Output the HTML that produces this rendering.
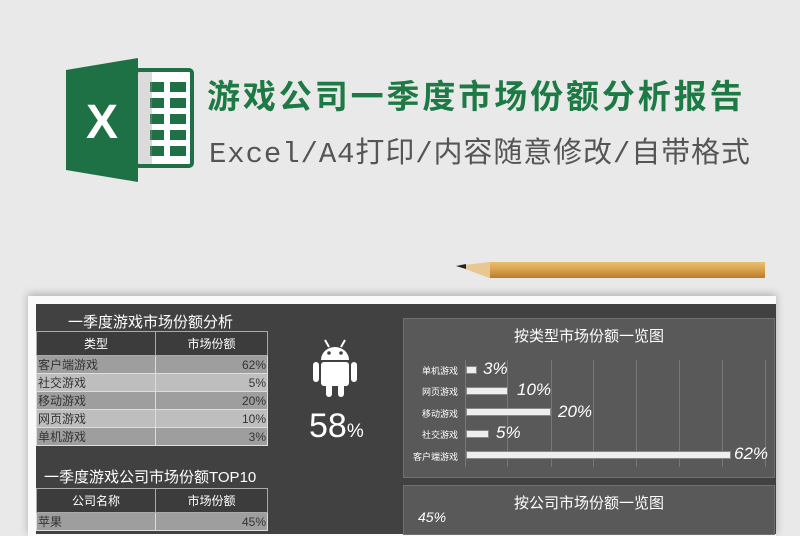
<!DOCTYPE html>
<html><head><meta charset="utf-8"><style>
*{margin:0;padding:0;box-sizing:border-box}
body{width:800px;height:526px;overflow:hidden;background:#e9e9e9;font-family:"Liberation Sans","Noto Sans CJK SC",sans-serif;position:relative}
.abs{position:absolute}
.t1{left:207px;top:70px;font-size:33px;font-weight:bold;color:#1e7a45;letter-spacing:2.9px;white-space:nowrap;font-family:"Noto Sans CJK SC",sans-serif}
.t2{left:209px;top:129px;font-size:29px;color:#555;white-space:nowrap;font-family:"Liberation Mono","Noto Sans CJK SC",monospace;letter-spacing:0.9px}
.paper{left:28px;top:296px;width:748px;height:240px;background:#fafafa;box-shadow:0 -2px 8px rgba(0,0,0,.25)}
.sheet{left:36px;top:304px;width:740px;height:230px;background:#414141}
table{border-collapse:collapse;position:absolute;left:36px;width:232px;font-size:12px;table-layout:fixed}
td{height:18px;border:1px solid #ddd;padding:0 1px;color:#333;line-height:16px}
td:first-child{width:119px}
td.r{text-align:right}
tr.h td{background:#3c3c3c;color:#fff;text-align:center;height:24px;border-color:#aaa}
tr.a td{background:#9e9e9e}
tr.b td{background:#bebebe}
.ttl{color:#fff;font-size:15px;white-space:nowrap}
.panel{left:403px;width:372px;background:#595959;border:1px solid #707070}
.lbl{color:#fff;font-size:9px;width:60px;text-align:right;left:398px}
.bar{left:466px;height:8px;background:#eee;border:1px solid #888}
.pct{color:#fff;font-style:italic;font-size:17px}
.g{top:360px;height:107px;width:1px;background:#777}
</style></head><body>
<svg class="abs" style="left:66px;top:58px" width="128" height="124" viewBox="0 0 128 124">
<rect x="70" y="12" width="56" height="96" rx="3" fill="#fff" stroke="#1f7044" stroke-width="4"/>
<g fill="#1f7044">
<rect x="84" y="24" width="14" height="10"/><rect x="104" y="24" width="16" height="10"/>
<rect x="84" y="40" width="14" height="10"/><rect x="104" y="40" width="16" height="10"/>
<rect x="84" y="56" width="14" height="10"/><rect x="104" y="56" width="16" height="10"/>
<rect x="84" y="72" width="14" height="10"/><rect x="104" y="72" width="16" height="10"/>
<rect x="84" y="88" width="14" height="10"/><rect x="104" y="88" width="16" height="10"/>
</g>
<rect x="70" y="14" width="16" height="92" fill="#999" opacity=".35"/>
<path d="M0 12 L72 0 L72 124 L0 112 Z" fill="#1e7145"/>
<text x="36" y="80" fill="#fff" font-size="48" font-weight="bold" text-anchor="middle" font-family="Liberation Sans">X</text>
</svg>
<div class="abs t1">游戏公司一季度市场份额分析报告</div>
<div class="abs t2">Excel/A4打印/内容随意修改/自带格式</div>
<svg class="abs" style="left:450px;top:258px" width="320" height="30">
<defs><linearGradient id="p" x1="0" y1="0" x2="0" y2="1"><stop offset="0" stop-color="#e8c070"/><stop offset=".5" stop-color="#d9a14a"/><stop offset="1" stop-color="#b77c2e"/></linearGradient></defs>
<path d="M8 8 L40 4 L315 4 L315 20 L40 20 Z" fill="url(#p)"/>
<path d="M8 8 L40 4 L40 20 Z" fill="#e8c890"/>
<path d="M6 8 L16 6 L16 11 Z" fill="#222"/>
</svg>
<div class="abs paper"></div>
<div class="abs sheet"></div>
<div class="abs ttl" style="left:68px;top:311px">一季度游戏市场份额分析</div>
<table style="top:331px">
<tr class="h"><td>类型</td><td>市场份额</td></tr>
<tr class="a"><td>客户端游戏</td><td class="r">62%</td></tr>
<tr class="b"><td>社交游戏</td><td class="r">5%</td></tr>
<tr class="a"><td>移动游戏</td><td class="r">20%</td></tr>
<tr class="b"><td>网页游戏</td><td class="r">10%</td></tr>
<tr class="a"><td>单机游戏</td><td class="r">3%</td></tr>
</table>
<div class="abs ttl" style="left:44px;top:466px">一季度游戏公司市场份额TOP10</div>
<table style="top:488px">
<tr class="h"><td>公司名称</td><td>市场份额</td></tr>
<tr class="a"><td>苹果</td><td class="r">45%</td></tr>
</table>
<svg class="abs" style="left:311px;top:338px" width="50" height="60" viewBox="0 0 50 60" fill="#fff">
<line x1="14" y1="2" x2="18" y2="9" stroke="#fff" stroke-width="2"/><line x1="34" y1="2" x2="30" y2="9" stroke="#fff" stroke-width="2"/>
<path d="M10 22 A14 13 0 0 1 38 22 Z"/>
<circle cx="18" cy="15" r="1.8" fill="#414141"/><circle cx="30" cy="15" r="1.8" fill="#414141"/>
<rect x="10" y="24" width="28" height="24" rx="3"/>
<rect x="2" y="24" width="6" height="20" rx="3"/><rect x="40" y="24" width="6" height="20" rx="3"/>
<rect x="15" y="44" width="6" height="15" rx="3"/><rect x="27" y="44" width="6" height="15" rx="3"/>
</svg>
<div class="abs" style="left:309px;top:407px;color:#fff;font-size:34px">58<span style="font-size:19px">%</span></div>
<div class="abs panel" style="top:318px;height:160px"></div>
<div class="abs panel" style="top:485px;height:50px"></div>
<div class="abs" style="left:403px;top:325px;width:372px;text-align:center;color:#fff;font-size:15px">按类型市场份额一览图</div>
<div class="abs" style="left:403px;top:492px;width:372px;text-align:center;color:#fff;font-size:15px">按公司市场份额一览图</div>
<div class="abs pct" style="left:418px;top:509px;font-size:14px">45%</div>
<div class="abs g" style="left:465px"></div><div class="abs g" style="left:507px"></div><div class="abs g" style="left:551px"></div><div class="abs g" style="left:593px"></div><div class="abs g" style="left:636px"></div><div class="abs g" style="left:679px"></div><div class="abs g" style="left:722px"></div><div class="abs g" style="left:765px"></div>
<div class="abs lbl" style="top:364px">单机游戏</div><div class="abs bar" style="top:366px;width:11px"></div><div class="abs pct" style="left:483px;top:359px">3%</div>
<div class="abs lbl" style="top:385px">网页游戏</div><div class="abs bar" style="top:387px;width:42px"></div><div class="abs pct" style="left:517px;top:380px">10%</div>
<div class="abs lbl" style="top:407px">移动游戏</div><div class="abs bar" style="top:408px;width:85px"></div><div class="abs pct" style="left:558px;top:402px">20%</div>
<div class="abs lbl" style="top:428px">社交游戏</div><div class="abs bar" style="top:430px;width:23px"></div><div class="abs pct" style="left:496px;top:423px">5%</div>
<div class="abs lbl" style="top:450px">客户端游戏</div><div class="abs bar" style="top:451px;width:265px"></div><div class="abs pct" style="left:734px;top:444px">62%</div>
</body></html>
